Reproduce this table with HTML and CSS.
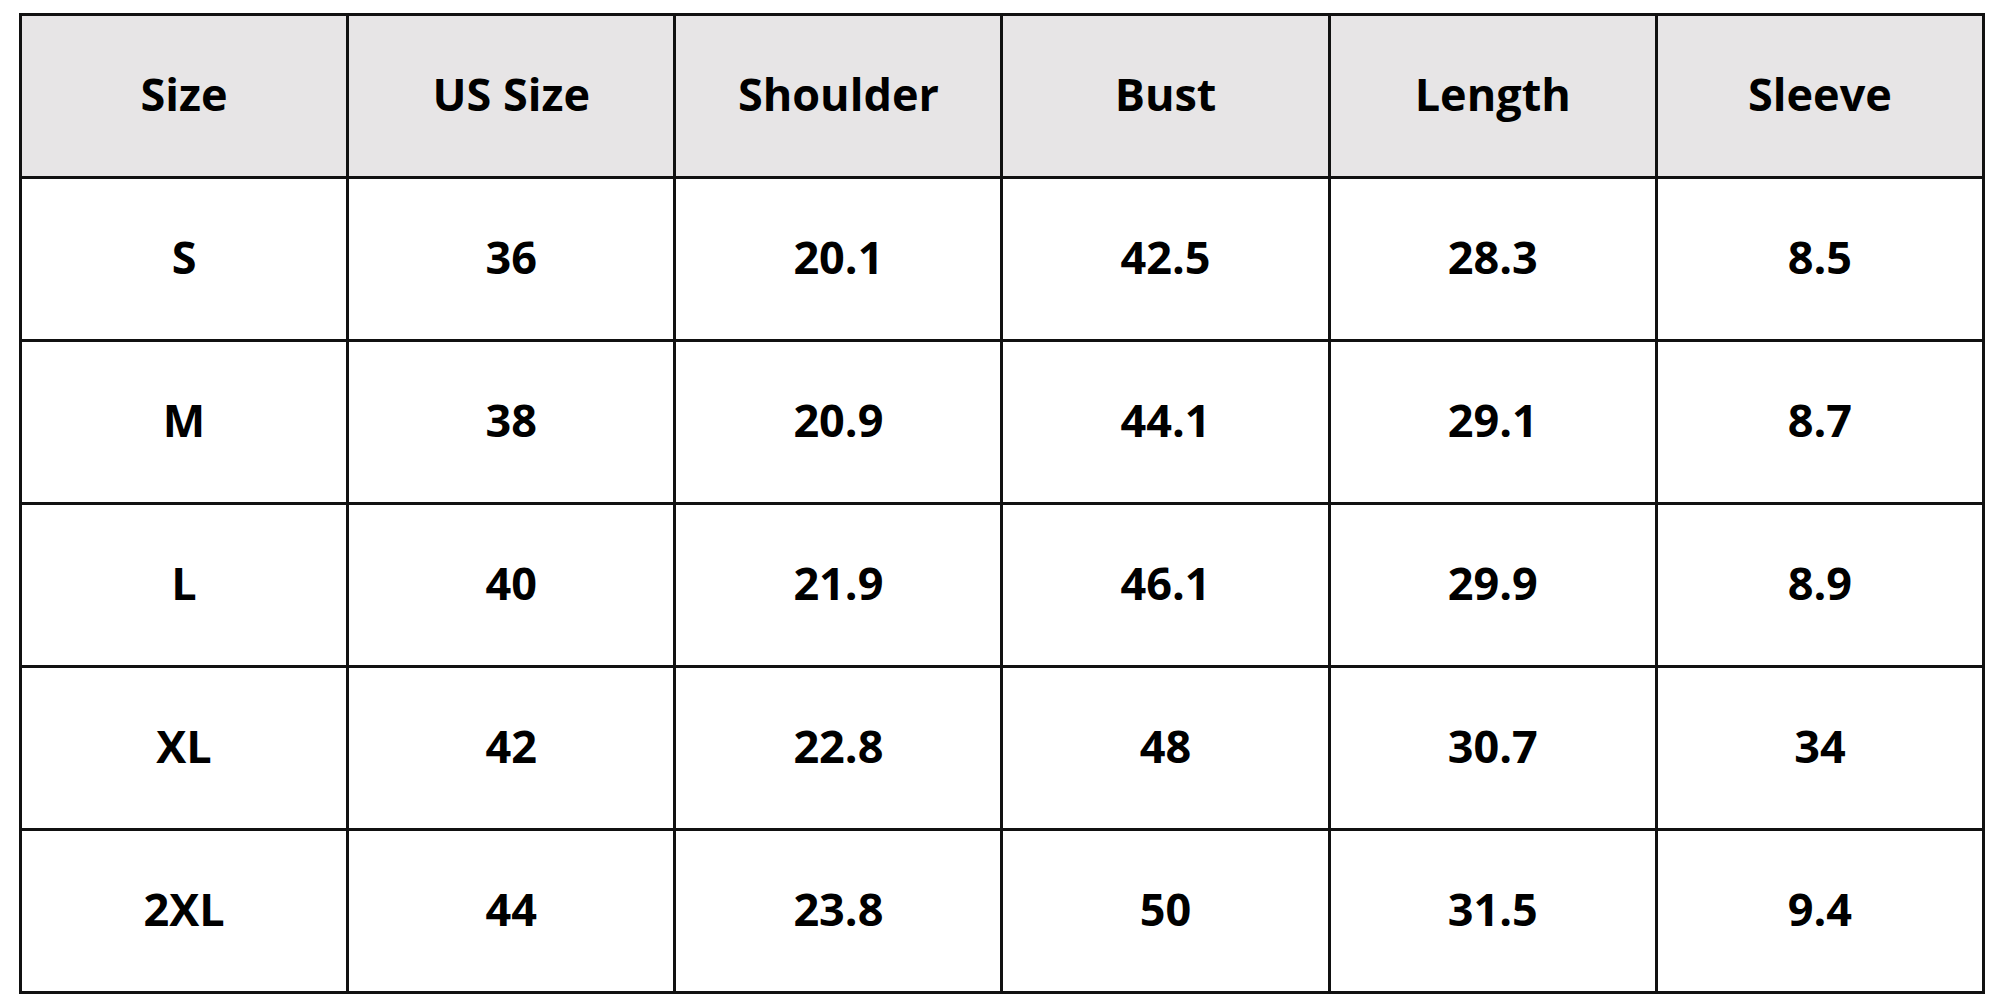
FILE: index.html
```html
<!DOCTYPE html>
<html>
<head>
<meta charset="utf-8">
<link rel="stylesheet" href="styles.css">
</head>
<body>
<table class="size-chart">
  <thead>
    <tr><th>Size</th><th>US Size</th><th>Shoulder</th><th>Bust</th><th>Length</th><th>Sleeve</th></tr>
  </thead>
  <tbody>
    <tr><td>S</td><td>36</td><td>20.1</td><td>42.5</td><td>28.3</td><td>8.5</td></tr>
    <tr><td>M</td><td>38</td><td>20.9</td><td>44.1</td><td>29.1</td><td>8.7</td></tr>
    <tr><td>L</td><td>40</td><td>21.9</td><td>46.1</td><td>29.9</td><td>8.9</td></tr>
    <tr><td>XL</td><td>42</td><td>22.8</td><td>48</td><td>30.7</td><td>34</td></tr>
    <tr><td>2XL</td><td>44</td><td>23.8</td><td>50</td><td>31.5</td><td>9.4</td></tr>
  </tbody>
</table>
</body>
</html>
```
FILE: styles.css
```css
html, body {
  margin: 0;
  padding: 0;
  background: #ffffff;
}
body {
  padding: 13px 0 0 19px;
}
.size-chart {
  border-collapse: collapse;
  width: 1966px;
  height: 980px;
  table-layout: fixed;
  font-family: "Open Sans", "Liberation Sans", sans-serif;
  font-weight: 700;
  font-size: 45px;
  color: #000;
}
.size-chart th,
.size-chart td {
  border: 3px solid #111;
  text-align: center;
  vertical-align: middle;
  padding: 0 0 5px 0;
  height: 155px;
  font-weight: 700;
}
.size-chart th {
  background: #e7e5e6;
}
```
